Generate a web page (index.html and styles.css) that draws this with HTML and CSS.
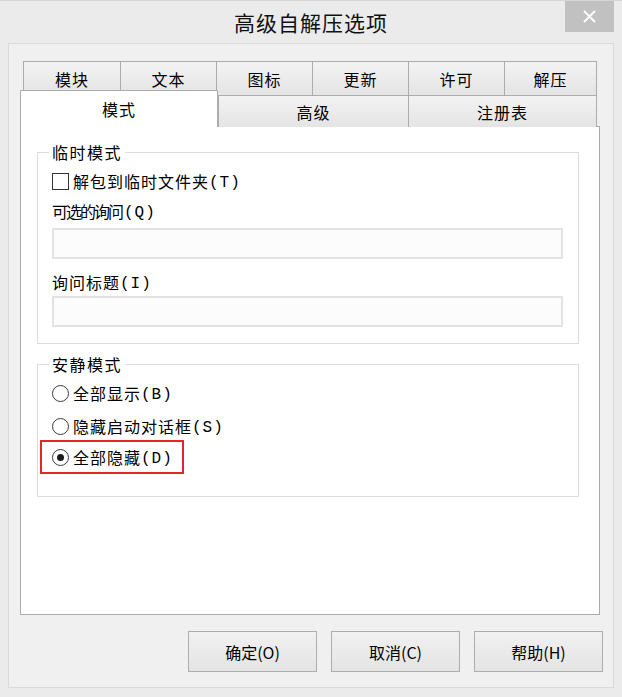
FILE: index.html
```html
<!DOCTYPE html>
<html lang="zh-CN">
<head>
    <meta charset="UTF-8">
    <meta name="viewport" content="width=device-width, initial-scale=1.0">
    <title>高级自解压选项</title>
    <link rel="stylesheet" href="styles.css">
</head>
<body>
<div class="window">
    <div class="titlebar">
        <span></span>
        <h1 class="title">高级自解压选项</h1>
        <button class="close-btn" type="button" aria-label="关闭">
            <svg width="13" height="13" viewBox="0 0 13 13">
                <path d="M1 1 L12 12 M12 1 L1 12" stroke="#fff" stroke-width="1.8" fill="none"/>
            </svg>
        </button>
    </div>

    <div class="client">
        <div class="tab-row row-top">
            <div class="tab">模块</div>
            <div class="tab">文本</div>
            <div class="tab">图标</div>
            <div class="tab">更新</div>
            <div class="tab">许可</div>
            <div class="tab">解压</div>
        </div>
        <div class="tab-row row-bottom">
            <div class="tab tab-active">模式</div>
            <div class="tab">高级</div>
            <div class="tab">注册表</div>
        </div>

        <div class="panel">
            <fieldset class="group">
                <legend>临时模式</legend>
                <label class="option-row">
                    <span class="checkbox"></span>
                    <span class="option-text">解包到临时文件夹</span><span class="key">(T)</span>
                </label>
                <div class="field-label label-tight"><span>可选的询问</span><span class="key">(Q)</span></div>
                <div class="textbox"></div>
                <div class="field-label label-second"><span>询问标题</span><span class="key">(I)</span></div>
                <div class="textbox textbox-second"></div>
            </fieldset>

            <fieldset class="group group-silent">
                <legend>安静模式</legend>
                <label class="option-row">
                    <span class="radio"></span>
                    <span class="option-text">全部显示</span><span class="key">(B)</span>
                </label>
                <label class="option-row">
                    <span class="radio"></span>
                    <span class="option-text">隐藏启动对话框</span><span class="key">(S)</span>
                </label>
                <div class="highlight">
                    <label class="option-row">
                        <span class="radio radio-checked"></span>
                        <span class="option-text">全部隐藏</span><span class="key">(D)</span>
                    </label>
                </div>
            </fieldset>
        </div>

        <div class="buttons">
            <button class="btn" type="button">确定(O)</button>
            <button class="btn" type="button">取消(C)</button>
            <button class="btn" type="button">帮助(H)</button>
        </div>
    </div>
</div>
</body>
</html>
```

FILE: styles.css
```css
body {
    margin: 0;
    background: #ebebeb;
    font-family: "Noto Sans CJK SC", "Noto Sans", sans-serif;
    font-size: 16px;
    color: #000;
}
.window {
    width: 622px;
    height: 697px;
    box-sizing: border-box;
    border-top: 1px solid #d6d6d6;
}

/* title bar */
.titlebar {
    height: 42px;
    display: grid;
    grid-template-columns: 1fr auto 1fr;
    align-items: center;
}
.title {
    margin: 0;
    font-size: 21px;
    font-weight: normal;
    letter-spacing: 1px;
    line-height: 28px;
    color: #111;
}
.close-btn {
    justify-self: end;
    align-self: start;
    width: 49px;
    height: 31px;
    margin-right: 8px;
    padding: 0;
    border: none;
    background: #c1c1c1;
    display: flex;
    align-items: center;
    justify-content: center;
}

/* dialog body */
.client {
    margin: 0 8px;
    height: 645px;
    box-sizing: border-box;
    border: 1px solid #dadada;
    background: #f0f0f0;
    padding: 17px 10px 0 11px;
}

/* tabs */
.tab-row {
    display: grid;
}
.row-top {
    grid-template-columns: 97px 96px 96px 96px 96px 93px;
    height: 34px;
    margin-left: 3px;
}
.row-bottom {
    grid-template-columns: 198px 190px 189px;
    grid-template-rows: 32px;
    align-items: start;
}
.tab {
    box-sizing: border-box;
    height: 100%;
    border: 1px solid #acacac;
    border-right: none;
    border-bottom: none;
    background: linear-gradient(#f3f3f3, #e4e4e4);
    display: flex;
    align-items: center;
    justify-content: center;
    letter-spacing: 1px;
}
.row-bottom .tab {
    height: 32px;
}
.tab:last-child {
    border-right: 1px solid #acacac;
}
.row-bottom .tab-active {
    height: 37px;
    margin-top: -5px;
    position: relative;
    z-index: 1;
    background: #fff;
    border-right: 1px solid #acacac;
}

.panel {
    width: 580px;
    height: 489px;
    margin-top: -1px;
    box-sizing: border-box;
    border: 1px solid #acacac;
    background: #fff;
    padding: 14px 0 0 16px;
}

/* group boxes */
.group {
    width: 542px;
    min-inline-size: 0;
    box-sizing: border-box;
    margin: 0;
    border: 1px solid #dcdcdc;
    padding: 7px 14px 16px;
}
.group legend {
    padding: 0 3px;
    margin-left: -3px;
    height: 22px;
    line-height: 22px;
    letter-spacing: 1.5px;
}
.group-silent {
    margin-top: 9px;
    padding-bottom: 22px;
}

.option-row,
.field-label {
    display: flex;
    align-items: center;
    height: 22px;
    line-height: 22px;
}
.option-row + .option-row {
    margin-top: 11px;
}
.option-text {
    letter-spacing: 1px;
}
.key {
    font-family: "Liberation Mono", monospace;
    letter-spacing: 1px;
    margin-top: 3px;
}
.checkbox {
    width: 17px;
    height: 17px;
    box-sizing: border-box;
    border: 1px solid #333;
    background: #fff;
    margin-right: 4px;
}
.radio {
    width: 17px;
    height: 17px;
    box-sizing: border-box;
    border: 1px solid #3a3a3a;
    border-radius: 50%;
    background: #fff;
    margin-right: 4px;
    display: flex;
    align-items: center;
    justify-content: center;
}
.radio-checked::after {
    content: "";
    width: 7px;
    height: 7px;
    border-radius: 50%;
    background: #1a1a1a;
}
.highlight {
    width: fit-content;
    margin: 3px 0 0 -12px;
    border: 2px solid #e3262e;
    padding: 4px 9px 4px 10px;
}

.field-label {
    margin-top: 8px;
    letter-spacing: 1px;
}
.label-tight {
    letter-spacing: -2px;
}
.label-tight .key {
    letter-spacing: 1px;
    margin-left: 2px;
}
.label-second {
    margin-top: 12px;
}
.textbox {
    width: 511px;
    height: 31px;
    box-sizing: border-box;
    border: 2px solid #e3e3e3;
    background: #fcfcfc;
    margin-top: 6px;
}
.textbox-second {
    margin-top: 3px;
}

/* bottom buttons */
.buttons {
    display: flex;
    justify-content: flex-end;
    gap: 14px;
    margin-top: 16px;
}
.btn {
    width: 129px;
    height: 41px;
    border: 1px solid #adadad;
    background: linear-gradient(#f1f1f1, #e4e4e4);
    font-family: "Noto Sans CJK SC", "Noto Sans", sans-serif;
    font-size: 16px;
    color: #000;
    padding: 0;
}
```
